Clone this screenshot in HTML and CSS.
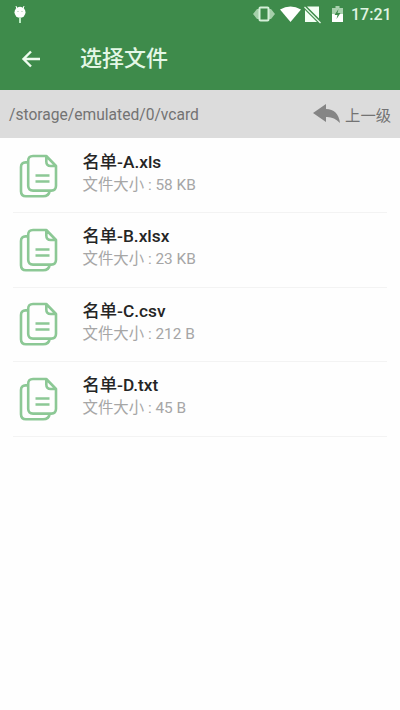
FILE: index.html
```
<!DOCTYPE html>
<html lang="zh-CN">
<head>
<meta charset="utf-8">
<title>选择文件</title>
<link rel="stylesheet" href="styles.css">
</head>
<body>
<svg class="defs" aria-hidden="true">
  <symbol id="files" viewBox="0 0 40 45">
    <path d="M8.8 8.400H6.500Q2 8.400 2 13V37.300Q2 42.300 7 42.300H24Q30 42.300 30.600 37"/>
    <path d="M14 2H27.300L37 12V31.800Q37 36.600 32.300 36.600H14Q9.200 36.600 9.200 31.800V6.800Q9.200 2 14 2ZM27.300 2V7.500Q27.300 12 31.800 12H37M16.500 21.500H30.500M16.500 27.500H30.500"/>
  </symbol>
</svg>
<header class="header">
  <div class="status">
    <svg class="bug" viewBox="0 0 14 19"><path d="M3 1l1 3M11 1l-1 3" stroke="#fff"/><circle cx="7" cy="7.300" r="5.500" fill="#fff"/><path d="M6 12h2v6h-2z" fill="#b9ecc2"/><circle cx="5" cy="6.500" r=".6" fill="#8fbd96"/><circle cx="9" cy="6.500" r=".6" fill="#8fbd96"/></svg>
    <svg class="signals" viewBox="0 0 94 20">
      <path d="M5 5H19L23 10L19 15H5L1 10Z" fill="#a5cfaa"/><rect x="7.500" y="3.500" width="9" height="13" rx="1" fill="#3e8b4b" stroke="#d6efd9" stroke-width="2"/>
      <path d="M28 5.500Q38.500-.5 49 5.500L38.500 18Z" fill="#fff"/>
      <path d="M55 2.500H67V14.500ZM53 6L65 18H53Z" fill="#f4fff5"/><path d="M52.500 3L68.500 19" stroke="#e8fbea" stroke-width="1.300"/>
      <path d="M83.500 2h4v2h3.500v6H80V4h3.500z" fill="#a9d1ae"/><path d="M80 10h11v8H80z" fill="#fff"/><path d="M86.500 5l-4 6h3l-1 4 4-6h-3z" fill="#3e8b4b"/>
    </svg>
    <span class="time">17:21</span>
  </div>
  <div class="bar">
    <svg class="back" viewBox="0 0 20 18"><path d="M19 9H2.500M10 1.500L2.500 9l7.500 7.500"/></svg>
    <h1 class="title">选择文件</h1>
  </div>
</header>
<div class="path">
  <span class="dir">/storage/emulated/0/vcard</span>
  <span class="up"><svg class="reply" viewBox="0 0 28 20"><path d="M0 9L13 0V5Q25 5 27 19Q21 12.500 13 13V18Z"/></svg><span>上一级</span></span>
</div>
<main class="list">
  <div class="row"><svg class="file"><use href="#files"/></svg><div class="info"><div class="name">名单-A.xls</div><div class="size">文件大小 : 58 KB</div></div></div>
  <div class="row"><svg class="file"><use href="#files"/></svg><div class="info"><div class="name">名单-B.xlsx</div><div class="size">文件大小 : 23 KB</div></div></div>
  <div class="row"><svg class="file"><use href="#files"/></svg><div class="info"><div class="name">名单-C.csv</div><div class="size">文件大小 : 212 B</div></div></div>
  <div class="row"><svg class="file"><use href="#files"/></svg><div class="info"><div class="name">名单-D.txt</div><div class="size">文件大小 : 45 B</div></div></div>
</main>
</body>
</html>
```
FILE: styles.css
```
* { box-sizing: border-box; }
body { margin: 0; height: 710px; background: #fefefe; font-family: Roboto, "Noto Sans CJK SC", sans-serif; overflow: hidden; }
.defs { display: none; }
.header { height: 90px; background: #3e8b4b; color: #fff; }
.status { display: flex; align-items: center; height: 29px; padding: 0 9px 0 13px; }
.bug { width: 14px; height: 19px; margin-top: -1px; }
.signals { width: 94px; height: 20px; margin: -1px 0 0 auto; }
.time { width: 40px; margin-left: 5px; font-size: 16px; font-weight: 500; color: #e0f4e2; white-space: nowrap; }
.bar { display: flex; align-items: center; height: 60px; padding-left: 21px; }
.back { width: 20px; height: 18px; fill: none; stroke: #eefbef; stroke-width: 2.4; }
.title { margin: 0 0 0 39px; font-size: 22px; line-height: 30px; font-weight: 500; color: #e4f7e6; }
.path { display: flex; align-items: center; justify-content: space-between; height: 48px; padding: 0 9px 0; background: #dcdcdc; color: #737373; }
.dir { font-size: 15.6px; padding-top: 2px; }
.up { display: flex; align-items: center; font-size: 15.3px; }
.reply { width: 28px; height: 20px; margin-right: 4px; fill: #858585; }
.list { padding: 1px 13px 0; }
.row { display: flex; height: 74.4px; padding: 13px 0 0 5px; border-bottom: 1px solid #f3f3f3; }
.file { width: 40px; height: 45px; margin-top: 1.5px; margin-left: .5px; fill: none; stroke: #8cc895; stroke-width: 2.6; stroke-linejoin: round; }
.info { margin-left: 24px; white-space: nowrap; }
.name { font-size: 17.3px; line-height: 20px; font-weight: 500; color: #252525; }
.size { margin-top: 3px; font-size: 15.4px; line-height: 20px; color: #a6a6a6; }
```
